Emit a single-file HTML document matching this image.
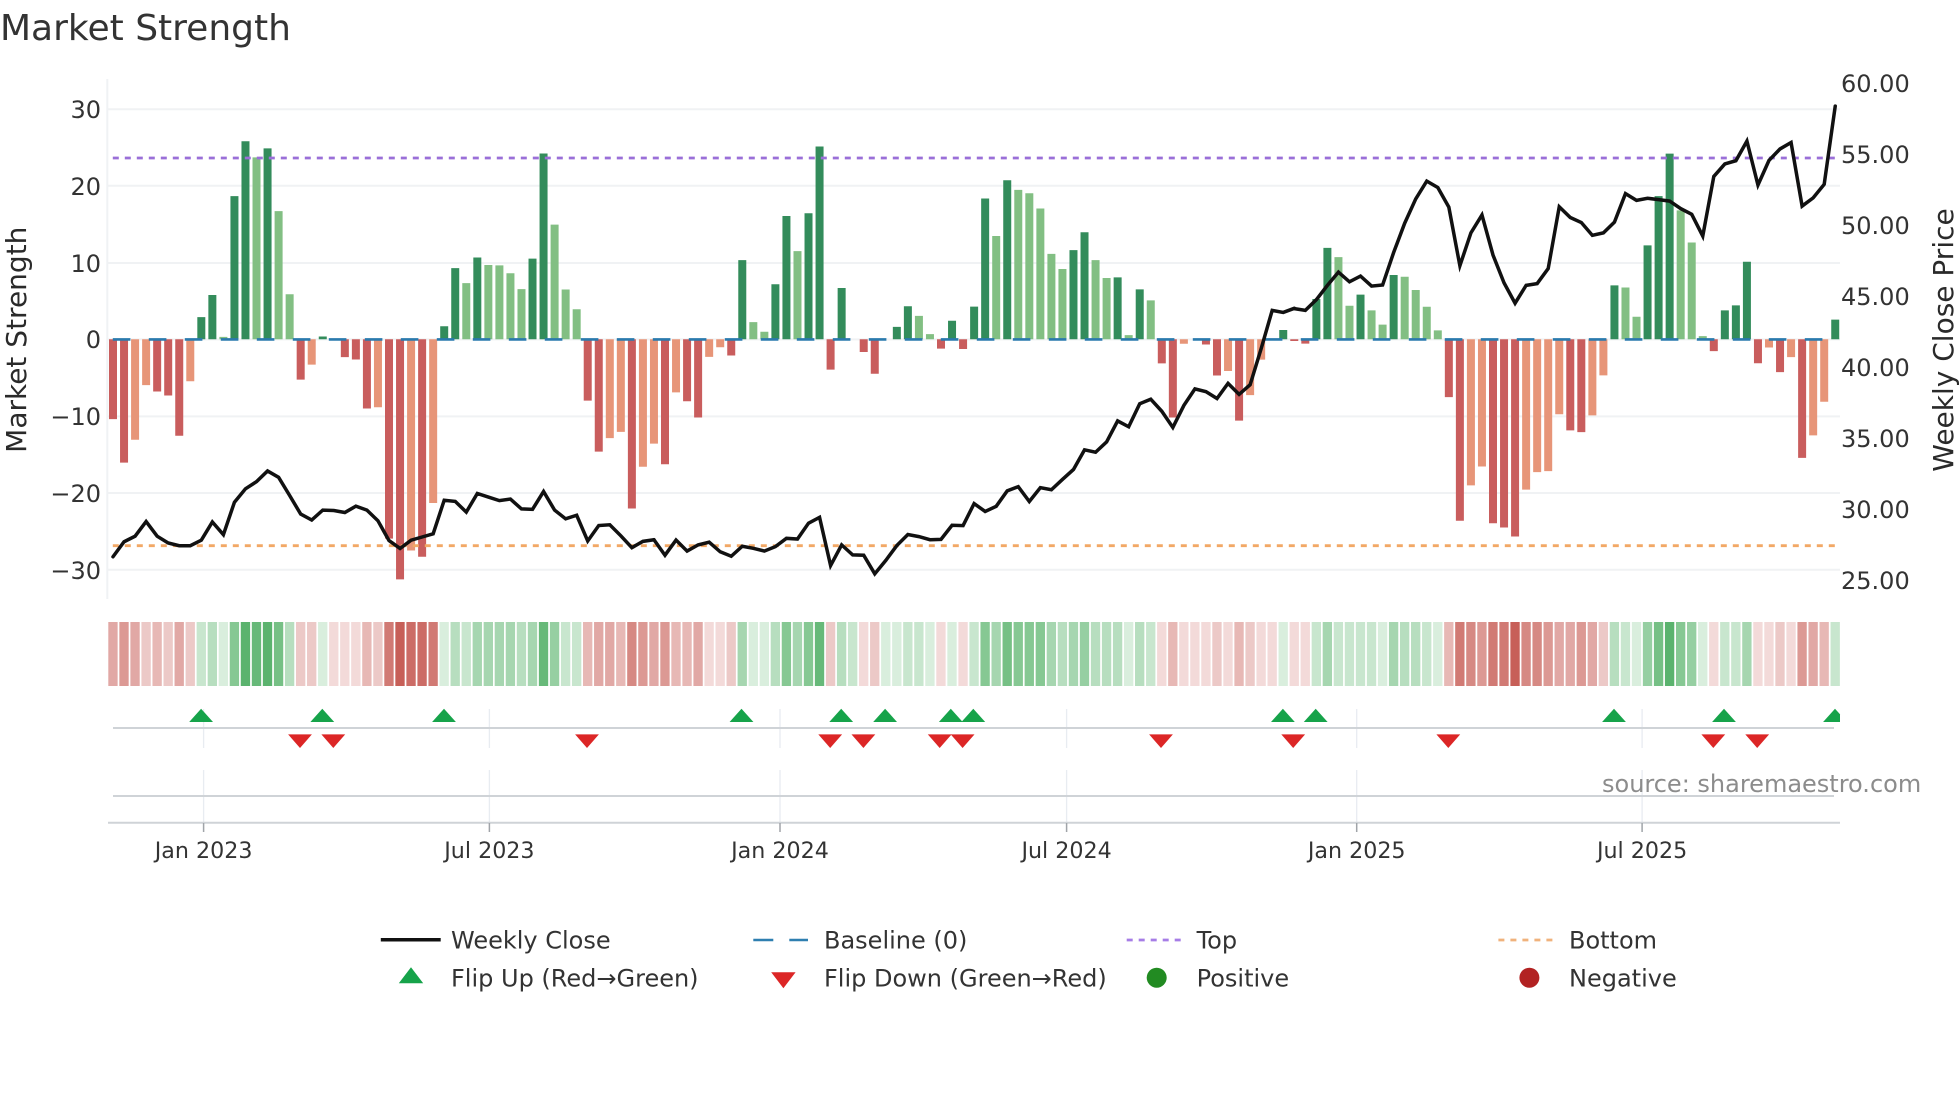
<!DOCTYPE html>
<html><head><meta charset="utf-8"><title>Market Strength</title>
<style>
html,body{margin:0;padding:0;background:#fff;width:1960px;height:1102px;overflow:hidden}
svg{display:block}
text{font-family:"DejaVu Sans","Liberation Sans",sans-serif;fill:#333}
.v path,.v polyline{vector-effect:non-scaling-stroke;fill:none}
.dr{stroke:#c95d5d;stroke-width:8}.sa{stroke:#e79578;stroke-width:8}.dg{stroke:#338c5b;stroke-width:8}.lg{stroke:#82bf83;stroke-width:8}
.bl{stroke:#111;stroke-width:3.5;stroke-linejoin:miter;stroke-linecap:round}
.h rect{width:.845px;height:64px}
.r2{fill:#f3dad9}.r3{fill:#ecc9c7}.r4{fill:#e7b8b5}.r5{fill:#e1a8a5}.r6{fill:#dc9994}.r7{fill:#d68983}.r8{fill:#d17a74}.r9{fill:#cc6c66}.r10{fill:#c75f58}
.g2{fill:#d9eedd}.g3{fill:#c8e6ce}.g4{fill:#b7debf}.g5{fill:#a6d6b0}.g6{fill:#96cfa2}.g7{fill:#86c893}.g8{fill:#76c085}.g9{fill:#67b979}.g10{fill:#5bb36e}
.u{fill:#16a34a}.d{fill:#dc2626}
.gl{stroke:#f0f2f4;stroke-width:2;fill:none}
.vg{stroke:#e8ecf1;stroke-width:1.3}
.ax{stroke:#cfd3d7;stroke-width:2}
.tk{stroke:#a0a4a9;stroke-width:1.5}
.yl{font-size:24px;text-anchor:end}
.yr{font-size:24px}
.xl{font-size:22.2px;text-anchor:middle}
.lt{font-size:24px}
</style></head><body>
<svg width="1960" height="1102" viewBox="0 0 1960 1102" xmlns="http://www.w3.org/2000/svg">
<text x="0" y="40" style="font-size:36px;fill:#333">Market Strength</text>

<path d="M107.3 79V599" class="gl"/>
<path class="gl" d="M107 109.2H1840M107 185.8H1840M107 263H1840M107 339.4H1840M107 416.4H1840M107 493H1840M107 569.7H1840"/>

<g class="v" transform="translate(113 339.3) scale(11.04 .39541) translate(0 -858)">
<path class="dr" d="M0 858V1060M1 858V1170M4 858V990M5 858V1000M6 858V1102M17 858V960M21 858V903M22 858V909M23 858V1033M25 858V1362M26 858V1465M28 858V1408M43 858V1013M44 858V1142M47 858V1286"/>
<path class="sa" d="M2 858V1112M3 858V974M7 858V964M18 858V922M24 858V1030M27 858V1392M29 858V1272M45 858V1108M46 858V1092"/>
<path class="dg" d="M8 858V802M9 858V746M11 858V496M12 858V357M14 858V375M19 858V851M30 858V825M31 858V678M33 858V651M38 858V654M39 858V388"/>
<path class="lg" d="M10 858V852M13 858V398M15 858V534M16 858V744M32 858V716M34 858V670M35 858V671M36 858V691M37 858V731M40 858V568M41 858V732M42 858V782"/>
</g>
<g class="v" transform="translate(113 339.3) scale(11.04 .34435) translate(0 -753)">
<path class="dr" d="M50 753V1116M52 753V933M53 753V980M56 753V800M65 753V841M68 753V790M69 753V853M75 753V780M77 753V781M95 753V823M96 753V980M99 753V768M100 753V858M102 753V989M107 753V758"/>
<path class="sa" d="M48 753V1123M49 753V1056M51 753V907M54 753V804M55 753V776M97 753V766M101 753V845M103 753V915M104 753V812"/>
<path class="dg" d="M57 753V523M60 753V593M61 753V395M63 753V387M64 753V193M66 753V604M71 753V717M72 753V657M76 753V699M78 753V658M79 753V344M81 753V291M87 753V494M88 753V442M91 753V573M93 753V608M106 753V726"/>
<path class="lg" d="M58 753V703M59 753V731M62 753V497M73 753V685M74 753V738M80 753V453M82 753V319M83 753V329M84 753V373M85 753V505M86 753V549M89 753V523M90 753V575M92 753V741M94 753V640"/>
</g>
<g class="v" transform="translate(113 339.3) scale(11.04 .35714) translate(0 -783)">
<path class="dr" d="M108 783V795M121 783V945M122 783V1291M125 783V1298M126 783V1310M127 783V1335M132 783V1038M133 783V1043M145 783V816M149 783V850M151 783V875M153 783V1115"/>
<path class="sa" d="M123 783V1192M124 783V1139M128 783V1204M129 783V1155M130 783V1152M131 783V993M134 783V996M135 783V884M150 783V806M152 783V833M154 783V1052M155 783V958"/>
<path class="dg" d="M109 783V670M110 783V527M113 783V658M116 783V603M136 783V632M139 783V520M140 783V382M141 783V263M146 783V702M147 783V688M148 783V566M156 783V728"/>
<path class="lg" d="M111 783V553M112 783V689M114 783V702M115 783V742M117 783V608M118 783V645M119 783V692M120 783V758M137 783V638M138 783V720M142 783V422M143 783V512M144 783V774"/>
</g>

<path d="M112.8 339.4H1835" stroke="#2a7aad" stroke-width="2.6" stroke-dasharray="17.6 18.4" fill="none"/>
<path d="M112.8 158H1835" stroke="#9a6fd8" stroke-width="2.8" stroke-dasharray="6 6" fill="none"/>
<path d="M112.8 545.7H1835" stroke="#f2a866" stroke-width="2.8" stroke-dasharray="6 6" fill="none"/>

<g class="v" transform="translate(113 339.3) scale(11.04 .39541) translate(0 -858)">
<polyline class="bl" points="0,1408 1,1370 2,1356 3,1319 4,1356 5,1373 6,1380 7,1380 8,1366 9,1320 10,1352 11,1270 12,1236 13,1218 14,1191 15,1207 16,1253 17,1300 18,1315 19,1290 20,1291 21,1296 22,1280 23,1290 24,1317 25,1367 26,1387 27,1366 28,1358 29,1350 30,1265 31,1268 32,1295 33,1248 34,1257 35,1266 36,1262 37,1287 38,1288 39,1243 40,1290 41,1312 42,1303 43,1368 44,1329 45,1327 46,1355 47,1385 48,1369 49,1365"/>
</g>
<g class="v" transform="translate(113 339.3) scale(11.04 .34435) translate(0 -753)">
<polyline class="bl" points="49,1335 50,1380 51,1336 52,1368 53,1350 54,1342 55,1370 56,1383 57,1354 58,1360 59,1368 60,1355 61,1331 62,1333 63,1287 64,1270 65,1410 66,1350 67,1379 68,1380 69,1434 70,1395 71,1352 72,1320 73,1326 74,1335 75,1334 76,1293 77,1294 78,1230 79,1253 80,1238 81,1193 82,1181 83,1224 84,1184 85,1190 86,1160 87,1131 88,1074 89,1081 90,1051 91,990 92,1007 93,940 94,927 95,962 96,1009 97,945 98,897 99,905 100,925 101,881 102,913 103,885 104,780 105,669 106,675 107,663"/>
</g>
<g class="v" transform="translate(113 339.3) scale(11.04 .35714) translate(0 -783)">
<polyline class="bl" points="107,697 108,702 109,672 110,632 111,595 112,622 113,606 114,634 115,631 116,540 117,458 118,390 119,340 120,358 121,413 122,577 123,485 124,435 125,547 126,625 127,682 128,632 129,627 130,585 131,412 132,442 133,456 134,492 135,485 136,455 137,375 138,394 139,388 140,392 141,396 142,417 143,433 144,494 145,327 146,292 147,283 148,228 149,351 150,282 151,250 152,232 153,410 154,387 155,349 156,130"/>
</g>

<g class="yl">
<text class="yl" x="101" y="118">30</text>
<text class="yl" x="101" y="195">20</text>
<text class="yl" x="101" y="272">10</text>
<text class="yl" x="101" y="348">0</text>
<text class="yl" x="101" y="425">−10</text>
<text class="yl" x="101" y="502">−20</text>
<text class="yl" x="101" y="579">−30</text>
</g>
<text class="yr" x="1841" y="92">60.00</text>
<text class="yr" x="1841" y="163">55.00</text>
<text class="yr" x="1841" y="234">50.00</text>
<text class="yr" x="1841" y="305">45.00</text>
<text class="yr" x="1841" y="376">40.00</text>
<text class="yr" x="1841" y="447">35.00</text>
<text class="yr" x="1841" y="518">30.00</text>
<text class="yr" x="1841" y="589">25.00</text>
<text transform="translate(26 339.7) rotate(-90)" text-anchor="middle" style="font-size:28px;fill:#2a2a2a">Market Strength</text>
<text transform="translate(1953 340) rotate(-90)" text-anchor="middle" style="font-size:28px;fill:#2a2a2a">Weekly Close Price</text>

<g class="h" transform="translate(108.3 622) scale(11.04 1)">
<rect x="0" class="r5"/><rect x="1" class="r6"/><rect x="2" class="r5"/><rect x="3" class="r3"/><rect x="4" class="r4"/><rect x="5" class="r3"/><rect x="6" class="r5"/><rect x="7" class="r3"/>
<rect x="8" class="g3"/><rect x="9" class="g4"/><rect x="10" class="g2"/><rect x="11" class="g7"/><rect x="12" class="g10"/><rect x="13" class="g9"/><rect x="14" class="g10"/><rect x="15" class="g8"/><rect x="16" class="g4"/>
<rect x="17" class="r3"/><rect x="18" class="r3"/><rect x="19" class="g2"/><rect x="20" class="r2"/><rect x="21" class="r2"/><rect x="22" class="r2"/><rect x="23" class="r4"/><rect x="24" class="r3"/><rect x="25" class="r8"/><rect x="26" class="r10"/><rect x="27" class="r9"/><rect x="28" class="r9"/><rect x="29" class="r8"/>
<rect x="30" class="g2"/><rect x="31" class="g4"/><rect x="32" class="g3"/><rect x="33" class="g5"/><rect x="34" class="g5"/><rect x="35" class="g5"/><rect x="36" class="g5"/><rect x="37" class="g4"/><rect x="38" class="g5"/><rect x="39" class="g9"/><rect x="40" class="g6"/><rect x="41" class="g3"/><rect x="42" class="g3"/>
<rect x="43" class="r4"/><rect x="44" class="r5"/><rect x="45" class="r5"/><rect x="46" class="r4"/><rect x="47" class="r7"/><rect x="48" class="r6"/><rect x="49" class="r5"/><rect x="50" class="r6"/><rect x="51" class="r4"/><rect x="52" class="r4"/><rect x="53" class="r5"/><rect x="54" class="r2"/><rect x="55" class="r2"/><rect x="56" class="r3"/>
<rect x="57" class="g5"/><rect x="58" class="g2"/><rect x="59" class="g2"/><rect x="60" class="g4"/><rect x="61" class="g7"/><rect x="62" class="g5"/><rect x="63" class="g7"/><rect x="64" class="g9"/>
<rect x="65" class="r3"/><rect x="66" class="g4"/><rect x="67" class="g3"/><rect x="68" class="r2"/><rect x="69" class="r3"/><rect x="70" class="g2"/><rect x="71" class="g2"/><rect x="72" class="g3"/><rect x="73" class="g3"/><rect x="74" class="g2"/><rect x="75" class="r2"/><rect x="76" class="g2"/><rect x="77" class="r2"/><rect x="78" class="g3"/>
<rect x="79" class="g7"/><rect x="80" class="g5"/><rect x="81" class="g8"/><rect x="82" class="g7"/><rect x="83" class="g7"/><rect x="84" class="g7"/><rect x="85" class="g5"/><rect x="86" class="g4"/><rect x="87" class="g5"/><rect x="88" class="g6"/><rect x="89" class="g4"/><rect x="90" class="g4"/><rect x="91" class="g4"/><rect x="92" class="g2"/><rect x="93" class="g4"/><rect x="94" class="g3"/>
<rect x="95" class="r2"/><rect x="96" class="r4"/><rect x="97" class="r2"/><rect x="98" class="r2"/><rect x="99" class="r2"/><rect x="100" class="r3"/><rect x="101" class="r2"/><rect x="102" class="r4"/><rect x="103" class="r3"/><rect x="104" class="r2"/><rect x="105" class="r2"/><rect x="106" class="g2"/><rect x="107" class="r2"/><rect x="108" class="r2"/>
<rect x="109" class="g3"/><rect x="110" class="g5"/><rect x="111" class="g3"/><rect x="112" class="g3"/><rect x="113" class="g3"/><rect x="114" class="g3"/><rect x="115" class="g2"/><rect x="116" class="g5"/><rect x="117" class="g4"/><rect x="118" class="g4"/><rect x="119" class="g3"/><rect x="120" class="g2"/>
<rect x="121" class="r4"/><rect x="122" class="r8"/><rect x="123" class="r7"/><rect x="124" class="r6"/><rect x="125" class="r8"/><rect x="126" class="r8"/><rect x="127" class="r10"/><rect x="128" class="r7"/><rect x="129" class="r7"/><rect x="130" class="r6"/><rect x="131" class="r5"/><rect x="132" class="r5"/><rect x="133" class="r6"/><rect x="134" class="r5"/><rect x="135" class="r3"/>
<rect x="136" class="g4"/><rect x="137" class="g3"/><rect x="138" class="g2"/><rect x="139" class="g6"/><rect x="140" class="g8"/><rect x="141" class="g10"/><rect x="142" class="g7"/><rect x="143" class="g6"/><rect x="144" class="g2"/>
<rect x="145" class="r2"/><rect x="146" class="g3"/><rect x="147" class="g3"/><rect x="148" class="g5"/><rect x="149" class="r2"/><rect x="150" class="r2"/><rect x="151" class="r3"/><rect x="152" class="r2"/><rect x="153" class="r6"/><rect x="154" class="r5"/><rect x="155" class="r4"/><rect x="156" class="g3"/>
</g>

<path class="vg" d="M203.6 709V748M489.4 709V748M780 709V748M1066.6 709V748M1356.7 709V748M1642.1 709V748M203.6 770V822M489.4 770V822M780 770V822M1066.6 770V822M1356.7 770V822M1642.1 770V822"/>
<path class="ax" d="M113 728H1834M113 796H1834M108 822.7H1840"/>
<path class="tk" d="M203.6 823V832M489.4 823V832M780 823V832M1066.6 823V832M1356.7 823V832M1642.1 823V832"/>

<g class="u">
<polygon points="201.1,708.7 213,722 189.2,722"/>
<polygon points="322.3,708.7 334.2,722 310.4,722"/>
<polygon points="444,708.7 455.9,722 432.1,722"/>
<polygon points="741.5,708.7 753.4,722 729.6,722"/>
<polygon points="841.2,708.7 853.1,722 829.3,722"/>
<polygon points="885.1,708.7 897,722 873.2,722"/>
<polygon points="950.8,708.7 962.7,722 938.9,722"/>
<polygon points="973.3,708.7 985.2,722 961.4,722"/>
<polygon points="1282.9,708.7 1294.8,722 1271,722"/>
<polygon points="1315.7,708.7 1327.6,722 1303.8,722"/>
<polygon points="1614,708.7 1625.9,722 1602.1,722"/>
<polygon points="1724,708.7 1735.9,722 1712.1,722"/>
<polygon points="1835,708.7 1840,714.2 1840,722 1823.1,722"/>
<polygon points="411,967.3 423.2,983.3 398.8,983.3"/>
</g>
<g class="d">
<polygon points="300,748 288.1,734.4 311.9,734.4"/>
<polygon points="333.3,748 321.4,734.4 345.2,734.4"/>
<polygon points="587,748 575.1,734.4 598.9,734.4"/>
<polygon points="830.2,748 818.3,734.4 842.1,734.4"/>
<polygon points="863.4,748 851.5,734.4 875.3,734.4"/>
<polygon points="939.7,748 927.8,734.4 951.6,734.4"/>
<polygon points="962.6,748 950.7,734.4 974.5,734.4"/>
<polygon points="1161,748 1149.1,734.4 1172.9,734.4"/>
<polygon points="1293.2,748 1281.3,734.4 1305.1,734.4"/>
<polygon points="1448.3,748 1436.4,734.4 1460.2,734.4"/>
<polygon points="1713.3,748 1701.4,734.4 1725.2,734.4"/>
<polygon points="1757.2,748 1745.3,734.4 1769.1,734.4"/>
<polygon points="783.4,988.3 771.2,972.3 795.6,972.3"/>
</g>

<text class="xl" x="203.6" y="858">Jan 2023</text>
<text class="xl" x="489.4" y="858">Jul 2023</text>
<text class="xl" x="780" y="858">Jan 2024</text>
<text class="xl" x="1066.6" y="858">Jul 2024</text>
<text class="xl" x="1356.7" y="858">Jan 2025</text>
<text class="xl" x="1642.1" y="858">Jul 2025</text>

<text x="1602" y="792" style="font-size:24px;fill:#8c8c8c">source: sharemaestro.com</text>

<path d="M380.8 939.8H440.7" stroke="#111" stroke-width="3.5"/>
<path d="M753.3 940H773.3M789.3 940H808" stroke="#2e7fb0" stroke-width="2.6"/>
<path d="M1126.7 940H1181" stroke="#a67de6" stroke-width="2.8" stroke-dasharray="6 6"/>
<path d="M1498.4 940H1553.9" stroke="#f0b27c" stroke-width="2.8" stroke-dasharray="6 6"/>
<circle cx="1156.7" cy="977.7" r="10" fill="#228b22"/>
<circle cx="1529.4" cy="977.7" r="10" fill="#b22222"/>

<text class="lt" x="451" y="948.5">Weekly Close</text>
<text class="lt" x="824" y="948.5">Baseline (0)</text>
<text class="lt" x="1196.6" y="948.5">Top</text>
<text class="lt" x="1569" y="948.5">Bottom</text>
<text class="lt" x="451" y="986.5">Flip Up (Red→Green)</text>
<text class="lt" x="824" y="986.5">Flip Down (Green→Red)</text>
<text class="lt" x="1196.6" y="986.5">Positive</text>
<text class="lt" x="1569" y="986.5">Negative</text>
</svg>
</body></html>
